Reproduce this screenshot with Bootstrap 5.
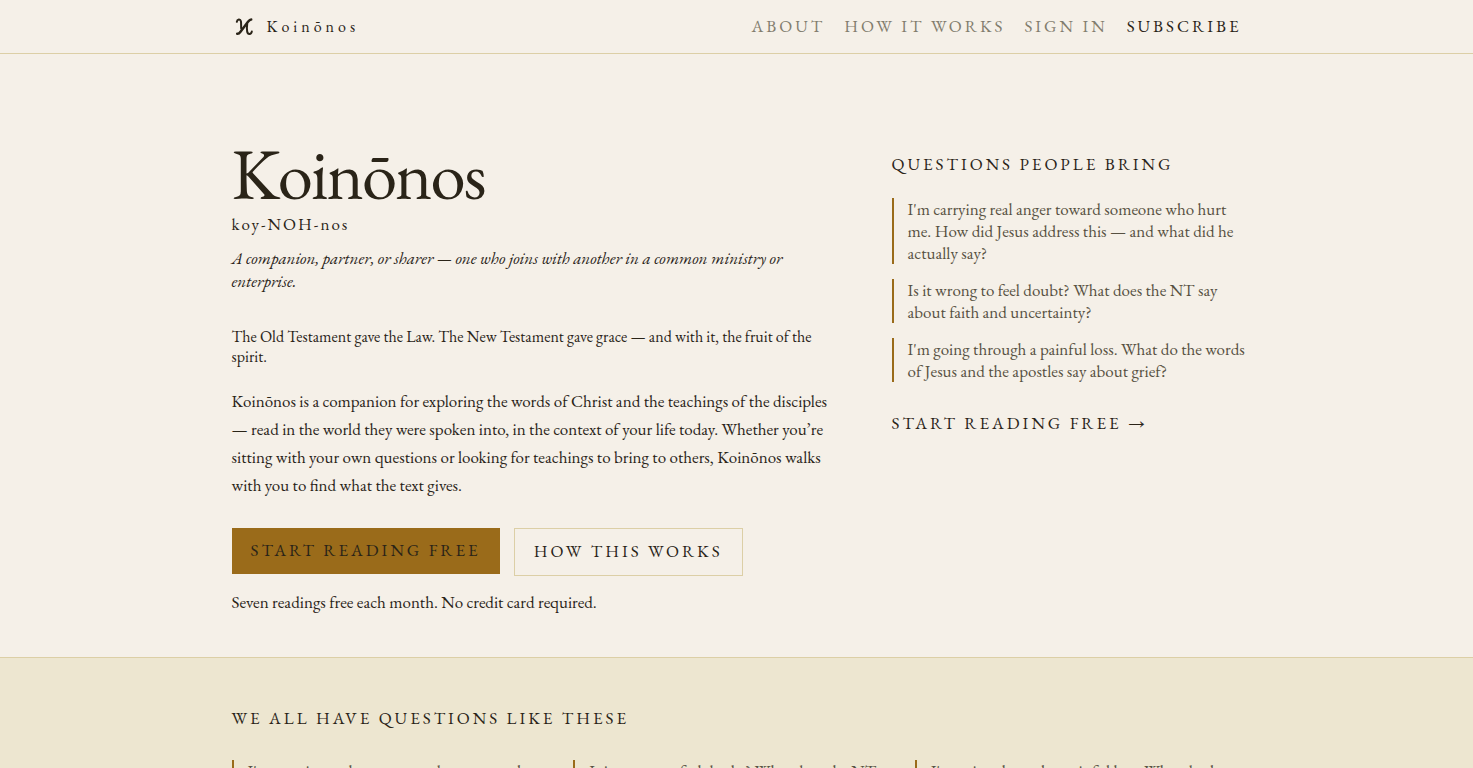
<!DOCTYPE html>
<html lang="en">
<head>
<meta charset="utf-8">
<meta name="viewport" content="width=device-width, initial-scale=1">
<title>Koinōnos</title>
<link href="https://cdn.jsdelivr.net/npm/bootstrap@5.3.0/dist/css/bootstrap.min.css" rel="stylesheet">
<style>
:root{--paper:#f5f0e8;--ink:#2a2418;--gold:#9a6b1a;--line:#dccfa6;--band:#ede6d0;--quiet:#827d6e;--soft:#575142}
body{background:var(--paper);color:var(--ink);font-family:"EB Garamond","Liberation Serif",serif;font-size:17px;line-height:20px}
a{color:inherit;text-decoration:none}
.page-wrap{width:100%;max-width:1010px}
.site-head{border-bottom:1px solid var(--line)}
.site-head .page-wrap{min-height:53px}
.brand-name{font-size:16px;letter-spacing:4px}
.caps{font-size:17px;line-height:24px;letter-spacing:3px;text-transform:uppercase;font-weight:400}
.site-links{gap:19px;padding-bottom:2px}
.site-links a{color:var(--quiet)}
.site-links a.strong-link{color:var(--ink)}
.hero{padding:88px 0 45px}
.hero-grid{display:grid;grid-template-columns:minmax(0,1fr);gap:48px}
.hero-title{font-size:71px;line-height:64px;font-weight:400;letter-spacing:-2px;margin-bottom:6px}
.say{letter-spacing:2px;line-height:24px;margin-bottom:11px}
.meaning{line-height:23px;margin-bottom:34px}
.thesis{font-size:16px;margin-bottom:20px}
.story{line-height:28px;margin-bottom:29px}
.actions{gap:14px;margin-bottom:16px}
.hero .btn{border-radius:0;padding:10px 19px 12px;color:var(--ink)}
.btn-gold{background:var(--gold);border:0}
.btn-line{border:1px solid var(--line)}
.aside-head{margin-bottom:22px}
.question-list{display:grid;gap:15px;margin-bottom:29px}
.question{border-left:2px solid var(--gold);padding-left:14px;line-height:22px;color:var(--soft)}
.band{background:var(--band);border-top:1px solid var(--line);padding:48px 0 64px}
.band-head{margin-bottom:30px}
.band-grid{display:grid;gap:15px}
.band-grid .question{padding-right:14px}
@media (min-width:992px){
.hero-grid{grid-template-columns:minmax(0,1fr) 350px;gap:62px}
.hero aside{padding-top:10px;margin-right:-8px}
.band-grid{grid-template-columns:repeat(3,minmax(0,1fr))}
}
</style>
</head>
<body>
<header class="site-head">
  <div class="page-wrap mx-auto d-flex flex-wrap align-items-center justify-content-between">
    <a href="#" class="d-flex align-items-center gap-2">
      <svg width="27" height="26" viewBox="0 0 27 26" fill="none" stroke="currentColor" stroke-linecap="round" stroke-linejoin="round" aria-hidden="true">
        <path d="M4.800 7.800C5.200 5 8.300 4.600 8.900 7.200C9.300 9 9 11.500 9.200 14.500" stroke-width="2"/>
        <path d="M19.200 5.500C18 5.500 17 6.500 16 7.800L8.500 17.800C7.500 19.200 6.500 20 5.200 19.800" stroke-width="2.500"/>
        <path d="M15.200 10C14.800 12.500 14.800 15.500 15.200 17.800C15.800 20.800 19.300 20.500 19.800 17.600" stroke-width="2"/>
      </svg>
      <span class="brand-name">Koinōnos</span>
    </a>
    <nav class="site-links caps d-flex flex-wrap" aria-label="Main">
      <a href="#about">About</a>
      <a href="#how">How it works</a>
      <a href="#signin">Sign in</a>
      <a href="#subscribe" class="strong-link">Subscribe</a>
    </nav>
  </div>
</header>
<main>
  <section class="hero">
    <div class="page-wrap mx-auto hero-grid">
      <div>
        <h1 class="hero-title">Koinōnos</h1>
        <p class="say">koy-NOH-nos</p>
        <p class="meaning fst-italic">A companion, partner, or sharer — one who joins with another in a common ministry or enterprise.</p>
        <p class="thesis">The Old Testament gave the Law. The New Testament gave grace — and with it, the fruit of the spirit.</p>
        <p class="story">Koinōnos is a companion for exploring the words of Christ and the teachings of the disciples — read in the world they were spoken into, in the context of your life today. Whether you’re sitting with your own questions or looking for teachings to bring to others, Koinōnos walks with you to find what the text gives.</p>
        <div class="actions d-flex flex-wrap align-items-start">
          <button type="button" class="btn btn-gold caps">Start reading free</button>
          <button type="button" class="btn btn-line caps">How this works</button>
        </div>
        <p class="mb-0">Seven readings free each month. No credit card required.</p>
      </div>
      <aside>
        <h2 class="caps aside-head">Questions people bring</h2>
        <div class="question-list">
          <p class="question mb-0">I'm carrying real anger toward someone who hurt me. How did Jesus address this — and what did he actually say?</p>
          <p class="question mb-0">Is it wrong to feel doubt? What does the NT say about faith and uncertainty?</p>
          <p class="question mb-0">I'm going through a painful loss. What do the words of Jesus and the apostles say about grief?</p>
        </div>
        <a href="#start" class="caps d-block">Start reading free →</a>
      </aside>
    </div>
  </section>
  <section class="band">
    <div class="page-wrap mx-auto">
      <h2 class="caps band-head">We all have questions like these</h2>
      <div class="band-grid">
        <p class="question mb-0">I'm carrying real anger toward someone who hurt me. How did Jesus address this — and what did he actually say?</p>
        <p class="question mb-0">Is it wrong to feel doubt? What does the NT say about faith and uncertainty?</p>
        <p class="question mb-0">I'm going through a painful loss. What do the words of Jesus and the apostles say about grief?</p>
      </div>
    </div>
  </section>
</main>
<script src="https://cdn.jsdelivr.net/npm/bootstrap@5.3.0/dist/js/bootstrap.bundle.min.js"></script>
</body>
</html>
